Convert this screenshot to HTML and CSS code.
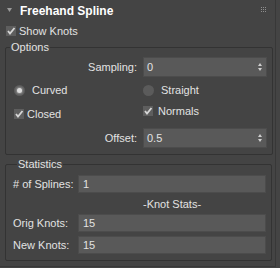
FILE: index.html
```html
<!DOCTYPE html>
<html lang="en">
<head>
    <meta charset="UTF-8">
    <title>Freehand Spline</title>
    <link rel="stylesheet" href="styles.css">
</head>
<body>
    <div class="panel">
        <div class="rollout-head">
            <svg class="arrow" width="5" height="4" viewBox="0 0 5 4"><path d="M0 0H5L2.5 4Z" fill="#9a9a9a"/></svg>
            <span class="title">Freehand Spline</span>
            <svg class="grip" width="5" height="5" viewBox="0 0 5 5" fill="#8e8e8e">
                <rect x="0" y="0" width="1" height="1"/><rect x="2" y="0" width="1" height="1"/><rect x="4" y="0" width="1" height="1"/>
                <rect x="0" y="2" width="1" height="1"/><rect x="2" y="2" width="1" height="1"/><rect x="4" y="2" width="1" height="1"/>
                <rect x="0" y="4" width="1" height="1"/><rect x="2" y="4" width="1" height="1"/><rect x="4" y="4" width="1" height="1"/>
            </svg>
        </div>

        <label class="check-row show-knots">
            <span class="check"><svg width="10" height="10" viewBox="0 0 10 10"><path d="M2 5L4 7.5L8.5 2" fill="none" stroke="#d6d6d6" stroke-width="1.8"/></svg></span>
            Show Knots
        </label>

        <fieldset class="group options">
            <legend>Options</legend>
            <div class="opt-row spin-row">
                <span class="opt-label">Sampling:</span>
                <div class="spinner"><span>0</span><span class="arrows"><i class="up"></i><i class="down"></i></span></div>
            </div>
            <div class="opt-row radio-row">
                <label class="radio-item first"><span class="radio on"></span>Curved</label>
                <label class="radio-item"><span class="radio"></span>Straight</label>
            </div>
            <div class="opt-row check-pair">
                <label class="check-item first closed">
                    <span class="check"><svg width="10" height="10" viewBox="0 0 10 10"><path d="M2 5L4 7.5L8.5 2" fill="none" stroke="#d6d6d6" stroke-width="1.8"/></svg></span>Closed
                </label>
                <label class="check-item normals">
                    <span class="check"><svg width="10" height="10" viewBox="0 0 10 10"><path d="M2 5L4 7.5L8.5 2" fill="none" stroke="#d6d6d6" stroke-width="1.8"/></svg></span>Normals
                </label>
            </div>
            <div class="opt-row spin-row offset">
                <span class="opt-label">Offset:</span>
                <div class="spinner"><span>0.5</span><span class="arrows"><i class="up"></i><i class="down"></i></span></div>
            </div>
        </fieldset>

        <fieldset class="group stats">
            <legend>Statistics</legend>
            <div class="stat-row">
                <span class="stat-label"># of Splines:</span>
                <div class="stat-box">1</div>
            </div>
            <div class="stat-caption">-Knot Stats-</div>
            <div class="stat-row">
                <span class="stat-label">Orig Knots:</span>
                <div class="stat-box">15</div>
            </div>
            <div class="stat-row last">
                <span class="stat-label">New Knots:</span>
                <div class="stat-box">15</div>
            </div>
        </fieldset>
    </div>
</body>
</html>
```

FILE: styles.css
```css
/* Reset */
* {
    margin: 0;
    padding: 0;
    box-sizing: border-box;
}

body {
    background-color: #444444;
    font-family: "Liberation Sans", Arial, sans-serif;
    font-size: 11px;
    color: #e2e2e2;
    width: 280px;
    height: 268px;
    overflow: hidden;
}

.panel {
    width: 276px;
    height: 267px;
    border-right: 1px solid #383838;
    border-bottom: 1px solid #383838;
}

/* Rollout header */
.rollout-head {
    height: 21px;
    display: flex;
    align-items: center;
    padding-left: 7px;
    padding-right: 9px;
}

.arrow {
    margin-top: -2px;
}

.title {
    font-size: 12px;
    font-weight: bold;
    color: #ffffff;
    margin-left: 8px;
    flex: 1;
}

.grip {
    margin-top: -3px;
}

/* Checkboxes */
.check {
    width: 10px;
    height: 10px;
    background-color: #5e5e5e;
    display: inline-block;
    flex: none;
}

.check svg {
    display: block;
}

.check-row {
    display: flex;
    align-items: center;
    height: 13px;
    margin-top: 3px;
    padding-left: 6px;
    gap: 3px;
}

/* Group boxes */
.group {
    margin: 0 3px 0 5px;
    border: 1px solid #333333;
    border-radius: 2px;
}

.group legend {
    margin-left: 4px;
    padding: 0 1px;
    line-height: 13px;
}

.options {
    margin-top: 4px;
    padding: 3px 5px 6px 0;
}

.opt-row {
    display: flex;
    align-items: center;
}

.spin-row {
    height: 20px;
}

.opt-label {
    width: 131px;
    text-align: right;
    margin-right: 6px;
}

.spinner {
    width: 124px;
    height: 20px;
    background-color: #595959;
    border: 1px solid #4c4c4c;
    display: flex;
    align-items: center;
    justify-content: space-between;
    padding: 0 4px 0 3px;
}

.arrows {
    display: flex;
    flex-direction: column;
    gap: 2px;
}

.arrows i {
    width: 0;
    height: 0;
    border-left: 2px solid transparent;
    border-right: 2px solid transparent;
}

.arrows .up {
    border-bottom: 3px solid #cfcfcf;
}

.arrows .down {
    border-top: 3px solid #cfcfcf;
}

.radio-row {
    height: 20px;
    margin-top: 3px;
}

.radio-item,
.check-item {
    display: flex;
    align-items: center;
}

.radio-item.first,
.check-item.first {
    width: 137px;
    padding-left: 8px;
}

.radio {
    width: 11px;
    height: 11px;
    border-radius: 50%;
    background-color: #5b5b5b;
    margin-right: 7px;
    display: flex;
    align-items: center;
    justify-content: center;
}

.radio.on::after {
    content: "";
    width: 5px;
    height: 5px;
    border-radius: 50%;
    background-color: #dcdcdc;
    box-shadow: 0 0 2px 1px rgba(200, 200, 200, 0.5);
}

.check-pair {
    height: 20px;
    margin-top: 2px;
    align-items: flex-start;
}

.check-item {
    gap: 3px;
}

.check-item.closed {
    margin-top: 6px;
}

.check-item.normals {
    margin-top: 3px;
    gap: 5px;
}

.offset {
    margin-top: 6px;
}

/* Statistics */
.stats {
    margin-top: 3px;
    padding: 4px 5px 6px 7px;
}

.stat-row {
    display: flex;
    align-items: center;
    height: 18px;
    margin-bottom: 1px;
}

.stat-label {
    width: 65px;
}

.stat-box {
    flex: 1;
    height: 18px;
    background-color: #595959;
    border: 1px solid #4c4c4c;
    padding-left: 4px;
    line-height: 16px;
}

.stat-caption {
    height: 20px;
    line-height: 20px;
    padding-left: 130px;
    margin-top: 1px;
}

.stat-row.last {
    margin-top: 4px;
    margin-bottom: 0;
}
```
